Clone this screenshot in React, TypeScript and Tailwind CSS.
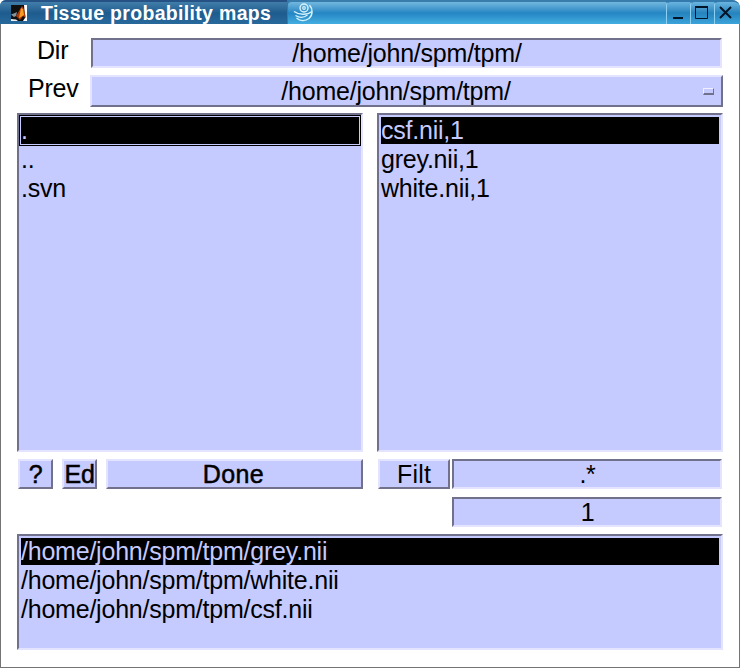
import type { ReactNode } from "react";
import clsx from "clsx";

const sunken =
  "border-2 border-t-[#71718c] border-l-[#71718c] border-r-[#e4e4ff] border-b-[#e4e4ff] bg-[#c5caff]";
const raised =
  "border-2 border-t-[#e4e4ff] border-l-[#e4e4ff] border-r-[#71718c] border-b-[#71718c] bg-[#c5caff]";

function Field({ className, children }: { className?: string; children: ReactNode }) {
  return (
    <div className={clsx("flex h-[30px] items-center justify-center pt-px pl-px", sunken, className)}>
      {children}
    </div>
  );
}

function Button({ className, children }: { className?: string; children: ReactNode }) {
  return (
    <button className={clsx("flex h-[30px] items-center justify-center pt-px", raised, className)}>
      {children}
    </button>
  );
}

function ListBox({ items, className }: { items: string[]; className?: string }) {
  return (
    <div className={clsx("px-0.5 pt-0.5", sunken, className)}>
      {items.map((item, i) => (
        <div
          key={item}
          className={clsx(
            "mb-0.5 h-[27px] leading-[27px]",
            i === 0 && "bg-black text-[#c5caff]",
          )}
        >
          {item}
        </div>
      ))}
    </div>
  );
}

function MatlabIcon() {
  return (
    <svg className="ml-[11px] h-4 w-4 shrink-0" viewBox="0 0 16 16">
      <path d="M0 0h16v16H0z" fill="#101010" />
      <path d="M13 0h3v16h-4l2-3z" fill="#fff" />
      <path d="M0 14l5 .5 2 1.5H0z" fill="#eee" />
      <path d="M0 9.500l4-1.500 2-1-1 4-2 1z" fill="#8195a0" />
      <path d="M5 11l3-5 3-5 2 3 2 9-3-2-3 4z" fill="#a93909" />
      <path d="M10 3l2 1 1 6-3 2-2 1z" fill="#f79b25" />
    </svg>
  );
}

function SwirlIcon() {
  return (
    <svg className="ml-1 h-[22px] w-[22px]" viewBox="0 0 22 22" fill="none" stroke="#d6f3fc">
      <circle cx="12" cy="6" r="4" strokeWidth="1.4" />
      <circle cx="12" cy="6" r="1.300" strokeWidth="1.2" />
      <path d="M2 9.500c5 3.500 13 4 18 0" strokeWidth="1.5" />
      <path d="M17.500 3c3.500 4 3.500 10-.5 13.500-4 3-9 2.500-12.500-.5" strokeWidth="1.4" />
      <path d="M3.500 13.500c4 2.500 8 2.500 12-.5" strokeWidth="1.300" />
    </svg>
  );
}

function WindowButton({ kind }: { kind: "min" | "max" | "close" }) {
  return (
    <div
      className={clsx(
        "h-6 rounded-tl-[5px] border-t-2 border-l border-t-[#347aac] border-l-[#8dd0f2] bg-linear-to-b from-[#69b5e0] via-[#2583bd] to-[#3ca4da]",
        kind === "close" ? "w-[26px] rounded-tr-[7px]" : "w-6",
      )}
    >
      <svg className="h-[22px] w-[23px]" viewBox="0 0 23 22" fill="none" stroke="#001427" strokeWidth="2">
        {kind === "min" && <path d="M6 16h10" />}
        {kind === "max" && <path d="M4.500 4.500h12v12h-12z" strokeWidth="1" />}
        {kind === "max" && <path d="M4 5h13" />}
        {kind === "close" && <path d="M5 5l11 11M16 5L5 16" />}
      </svg>
    </div>
  );
}

function TitleBar() {
  return (
    <div className="flex h-6 overflow-hidden rounded-tl-[6px] rounded-tr-[8px] bg-[#347aac]">
      <div className="flex w-[287px] items-center border-t-2 border-[#255184] bg-linear-to-b from-[#427eaa] via-[#1e5c8e] to-[#28699c]">
        <MatlabIcon />
        <span className="ml-3.5 text-[19.5px] leading-[22px] font-bold tracking-[0.32px] whitespace-nowrap text-white">
          Tissue probability maps
        </span>
      </div>
      <div className="flex flex-1 items-center rounded-tl-[5px] border-t-2 border-l border-t-[#397dac] border-l-[#347aac] bg-linear-to-b from-[#71b8df] via-[#2486c3] to-[#44aee0]">
        <SwirlIcon />
      </div>
      <WindowButton kind="min" />
      <WindowButton kind="max" />
      <WindowButton kind="close" />
    </div>
  );
}

export default function App() {
  return (
    <div className="flex h-[668px] w-[740px] flex-col bg-white font-['Liberation_Sans',Arial,sans-serif] text-[25px] leading-none tracking-[-0.22px] whitespace-nowrap text-black">
      <TitleBar />
      <div className="flex-1 border-x border-b border-[#747474] pt-3.5 pr-4 pl-4">
        <div className="flex h-[30px]">
          <div className="w-[74px] pl-5 leading-[25px]">Dir</div>
          <Field className="mr-px flex-1">/home/john/spm/tpm/</Field>
        </div>
        <div className="mt-[7px] flex h-8">
          <div className="w-[73px] pl-[11px] leading-[27px]">Prev</div>
          <div className={clsx("flex flex-1 items-center", raised)}>
            <span className="flex-1 pt-px pr-[3px] text-center">/home/john/spm/tpm/</span>
            <span className="mr-[7px] h-[7px] w-[11px] border border-t-[#eeeeff] border-r-[#71718c] border-b-2 border-b-[#71718c] border-l-[#eeeeff]" />
          </div>
        </div>
        <div className="mt-1.5 flex h-[339px] gap-3.5">
          <div className={clsx("w-[346px]", sunken)}>
            <div className="h-[31px] border border-black">
              <div className="h-[29px] border border-[#c5caff] bg-black leading-[27px] text-[#c5caff]">.</div>
            </div>
            <div className="h-[29px] pl-0.5 leading-[27px]">..</div>
            <div className="h-[29px] pl-0.5 leading-[27px]">.svn</div>
          </div>
          <ListBox className="w-[346px]" items={["csf.nii,1", "grey.nii,1", "white.nii,1"]} />
        </div>
        <div className="mt-[7px] flex pl-px">
          <Button className="w-[35px] [-webkit-text-stroke:0.5px_black]">?</Button>
          <Button className="ml-[9px] w-[35px] [-webkit-text-stroke:0.5px_black]">Ed</Button>
          <Button className="ml-[9px] w-[257px] pr-0.5 tracking-[0.4px] [-webkit-text-stroke:0.5px_black]">Done</Button>
          <Button className="ml-[15px] w-[72px] tracking-[0.2px]">Filt</Button>
          <Field className="ml-[2px] w-[270px]">.*</Field>
        </div>
        <div className="mt-2 flex justify-end pr-px">
          <Field className="w-[270px]">1</Field>
        </div>
        <ListBox
          className="mt-[7px] h-[116px]"
          items={["/home/john/spm/tpm/grey.nii", "/home/john/spm/tpm/white.nii", "/home/john/spm/tpm/csf.nii"]}
        />
      </div>
    </div>
  );
}
